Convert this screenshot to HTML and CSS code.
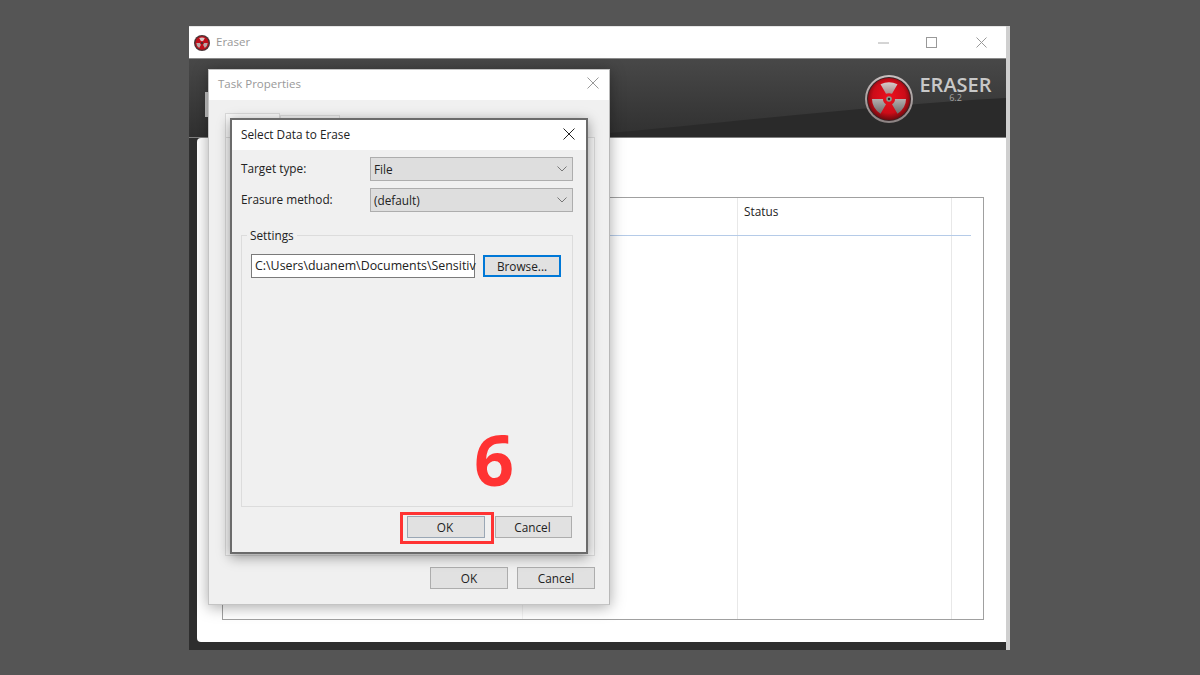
FILE: index.html
```html
<!DOCTYPE html>
<html lang="en">
<head>
<meta charset="utf-8">
<title>Eraser</title>
<link rel="stylesheet" href="styles.css">
</head>
<body>
<main class="desktop">
  <section class="app">
    <header class="app-title">
      <svg class="app-icon" viewBox="0 0 48 48"><circle cx="24" cy="24" r="24" fill="#4a3436"/><circle cx="24" cy="24" r="20" fill="#c00f1a"/><path d="M15.500 9.280Q24 5 32.500 9.280L27 18.800Q24 17.500 21 18.800Z" fill="#d8c8c8"/><path d="M41 24Q41 33 32.500 38.720L27 29.200Q30 27.500 30 24Z" fill="#b8a8a8"/><path d="M7 24Q7 33 15.500 38.720L21 29.200Q18 27.500 18 24Z" fill="#b8a8a8"/><circle cx="24" cy="24" r="3" fill="#333"/></svg>
      <span class="app-name">Eraser</span>
      <div class="win-controls">
        <svg class="ctl" viewBox="0 0 11 11"><path d="M0 6h11" stroke="#aaa" fill="none"/></svg>
        <svg class="ctl" viewBox="0 0 11 11"><rect x=".5" y=".5" width="10" height="10" stroke="#999" fill="none"/></svg>
        <svg class="ctl ctl-close" viewBox="0 0 11 11"><path d="M.5.5l10 10M10.500.5l-10 10" stroke="#999" fill="none"/></svg>
      </div>
    </header>
    <div class="app-banner">
      <svg class="swoosh" viewBox="0 0 817 80" preserveAspectRatio="none"><defs><linearGradient id="bg" x1="0" y1="0" x2="0" y2="1"><stop offset="0" stop-color="#484848"/><stop offset="1" stop-color="#303030"/></linearGradient></defs><rect width="817" height="80" fill="#2a2a2a"/><path d="M0 0H817V40C700 46 560 63 400 78L380 80H0Z" fill="url(#bg)"/></svg>
      <svg class="logo" viewBox="0 0 48 48">
        <defs>
          <radialGradient id="red" cx=".5" cy=".45" r=".55"><stop offset="0" stop-color="#ee101e"/><stop offset=".7" stop-color="#cc0c18"/><stop offset="1" stop-color="#6e090e"/></radialGradient>
          <linearGradient id="rim" x1="0" y1="0" x2="0" y2="1"><stop offset="0" stop-color="#c8c0c0"/><stop offset="1" stop-color="#8b8282"/></linearGradient>
          <linearGradient id="bladeTop" x1="0" y1="0" x2="0" y2="1"><stop offset="0" stop-color="#d8cccc"/><stop offset="1" stop-color="#a88a8a"/></linearGradient>
          <linearGradient id="blade" x1="0" y1="0" x2="0" y2="1"><stop offset="0" stop-color="#b4aeae"/><stop offset="1" stop-color="#6e6a6a"/></linearGradient>
        </defs>
        <circle cx="24" cy="24" r="24" fill="url(#rim)"/>
        <circle cx="24" cy="24" r="22" fill="#3a2426"/>
        <circle cx="24" cy="24" r="21" fill="url(#red)"/>
        <path d="M15.500 9.280Q24 5 32.500 9.280L27 18.800Q24 17.500 21 18.800Z" fill="url(#bladeTop)"/>
        <path d="M41 24Q41 33 32.500 38.720L27 29.200Q30 27.500 30 24Z" fill="url(#blade)"/>
        <path d="M7 24Q7 33 15.500 38.720L21 29.200Q18 27.500 18 24Z" fill="url(#blade)"/>
        <circle cx="24" cy="24" r="2.800" fill="#8c9a90"/>
        <circle cx="24" cy="24" r="1.200" fill="#2a2a2a"/>
      </svg>
      <div class="brand">
        <span class="brand-name">ERASER</span>
        <span class="brand-ver">6.2</span>
      </div>
    </div>
    <div class="app-body">
      <div class="task-list">
        <div class="list-head">
          <div class="col col-a"></div>
          <div class="col col-b"></div>
          <div class="col col-status">Status</div>
          <div class="col col-end"></div>
        </div>
        <div class="list-rows">
          <div class="col col-a"></div>
          <div class="col col-b"></div>
          <div class="col col-status"></div>
          <div class="col col-end"></div>
        </div>
      </div>
    </div>
  </section>

  <div class="peek"></div>

  <section class="dialog task-dialog">
    <header class="dlg-title inactive">
      <span>Task Properties</span>
      <svg class="x" viewBox="0 0 12 12"><path d="M.5.5l11 11M11.500.5l-11 11" stroke="#999" fill="none"/></svg>
    </header>
    <div class="task-body">
      <div class="tabs"><div class="tab tab-on"></div><div class="tab"></div></div>
      <div class="tab-panel"></div>
      <div class="btn-row">
        <button class="btn btn-lg">OK</button>
        <button class="btn btn-lg">Cancel</button>
      </div>
    </div>
  </section>

  <section class="dialog select-dialog">
    <header class="dlg-title">
      <span>Select Data to Erase</span>
      <svg class="x" viewBox="0 0 12 12"><path d="M.5.5l11 11M11.500.5l-11 11" stroke="#222" fill="none"/></svg>
    </header>
    <div class="select-body">
      <div class="field">
        <label class="field-label">Target type:</label>
        <div class="combo"><span>File</span><svg class="chev" viewBox="0 0 10 6"><path d="M.5.500 5 5 9.500.5" stroke="#777" fill="none"/></svg></div>
      </div>
      <div class="field">
        <label class="field-label">Erasure method:</label>
        <div class="combo"><span>(default)</span><svg class="chev" viewBox="0 0 10 6"><path d="M.5.500 5 5 9.500.5" stroke="#777" fill="none"/></svg></div>
      </div>
      <fieldset class="settings">
        <legend>Settings</legend>
        <div class="path-row">
          <div class="path-input">C:\Users\duanem\Documents\Sensitiv</div>
          <button class="btn btn-browse">Browse...</button>
        </div>
      </fieldset>
      <div class="btn-row inner">
        <button class="btn btn-md">OK</button>
        <button class="btn btn-md btn-cancel">Cancel</button>
      </div>
    </div>
  </section>

  <div class="step-box"></div>
  <div class="step-num">6</div>
</main>
</body>
</html>
```
FILE: styles.css
```css
* { box-sizing: border-box; }
html, body { margin: 0; height: 100%; }
body { background: #555; font-family: "Open Sans", "Noto Sans", sans-serif; font-size: 11.8px; color: #222; overflow: hidden; }
.desktop { position: relative; width: 1200px; height: 675px; background: #555; }

.app { position: absolute; left: 189px; top: 26px; width: 821px; height: 624px; background: #2e2e2e; border-right: 4px solid #cfcfcf; display: flex; flex-direction: column; }
.app-title { height: 32px; background: #fff; display: flex; align-items: center; padding: 0 19px 0 5px; border-top: 1px solid #e6e6e6; flex: none; }
.app-icon { width: 16px; height: 16px; }
.app-name { margin-left: 6px; margin-top: -2px; color: #999; font-size: 11.5px; }
.win-controls { margin-left: auto; display: flex; gap: 37px; }
.ctl { width: 11px; height: 11px; }
.ctl-close { margin-left: 2px; }
.app-banner { height: 80px; position: relative; flex: none; display: flex; justify-content: flex-end; align-items: flex-start; padding: 16px 15px 0 0; gap: 6px; border-top: 1px solid #8a8a8a; border-bottom: 1px solid #808080; }
.swoosh { position: absolute; inset: 0; width: 100%; height: 100%; }
.logo { position: relative; width: 48px; height: 48px; margin-right: 1px; }
.brand { position: relative; display: flex; flex-direction: column; align-items: center; width: 71px; }
.brand-name { font-size: 20px; font-weight: 600; color: #c8c8c8; line-height: 18px; margin-top: 1px; }
.brand-ver { font-size: 9px; color: #a4a4a4; line-height: 7px; }
.app-body { flex: 1; margin: 0 0 8px 8px; background: #fff; border-radius: 4px 0 0 4px; padding: 59px 22px 22px 25px; min-height: 0; }
.task-list { height: 423px; width: 762px; border: 1px solid #a0a0a0; display: flex; flex-direction: column; }
.list-head { height: 38px; display: flex; border-bottom: 1px solid #b5cbe8; margin-right: 12px; flex: none; }
.list-rows { flex: 1; display: flex; }
.col { border-right: 1px solid #e8e8e8; }
.col-a { width: 300px; border-right-color: #f3f3f3; }
.col-b { width: 215px; }
.col-status { width: 214px; padding: 5px 0 0 6px; line-height: 16px; color: #222; }
.col-end { border-right: 0; }

.peek { position: absolute; left: 205px; top: 92px; width: 5px; height: 25px; background: #c4c4c4; }

.dialog { position: absolute; background: #f0f0f0; display: flex; flex-direction: column; }
.dlg-title { background: #fff; display: flex; align-items: center; justify-content: space-between; flex: none; height: 30px; padding: 0 10px 2px 9px; }
.task-dialog { left: 208px; top: 69px; width: 402px; height: 536px; border: 1px solid #c4c4c4; border-right-color: #b8b8b8; box-shadow: 0 2px 14px rgba(0,0,0,.35); }
.task-dialog .dlg-title { font-size: 11.5px; padding-bottom: 4px; }
.inactive { color: #999; }
.x { width: 12px; height: 12px; }
.task-body { flex: 1; display: flex; flex-direction: column; padding: 13px 14px 15px 16px; }
.tabs { display: flex; height: 24px; align-items: flex-end; flex: none; }
.tab { width: 60px; height: 22px; border: 1px solid #d9d9d9; border-bottom: 0; background: #f0f0f0; }
.tab-on { width: 55px; height: 24px; background: #f8f8f8; }
.tab-panel { height: 419px; border: 1px solid #d9d9d9; background: #f6f6f6; flex: none; }
.btn-row { display: flex; justify-content: flex-end; gap: 9px; margin-top: 11px; }
.btn { font: inherit; color: #222; background: #e1e1e1; border: 1px solid #adadad; padding: 0; display: block; }
.btn-lg { width: 78px; height: 22px; }

.select-dialog { left: 230px; top: 118px; width: 358px; height: 436px; border: 2px solid #6b6b6b; box-shadow: 0 3px 12px rgba(0,0,0,.4); }
.select-dialog .dlg-title { padding-right: 11px; color: #222; }
.select-body { flex: 1; display: flex; flex-direction: column; padding: 7px 13px 15px 9px; }
.field { display: flex; align-items: center; height: 24px; margin-bottom: 7px; flex: none; }
.field-label { width: 129px; flex: none; margin-top: -2px; }
.combo { flex: 1; height: 24px; background: #dedede; border: 1px solid #adadad; display: flex; align-items: center; justify-content: space-between; padding: 0 5px 0 3px; }
.chev { width: 10px; height: 6px; }
.settings { margin: 9px 0 0; padding: 0 11px; width: 332px; height: 279px; border: 1px solid #dcdcdc; border-radius: 0; flex: none; }
.settings legend { padding: 0 3px; margin-left: -6px; line-height: 14px; }
.path-row { display: flex; align-items: center; gap: 8px; margin-top: 12px; margin-left: -2px; }
.path-input { width: 224px; height: 24px; background: #fff; border: 1px solid #7a7a7a; font-size: 12.4px; line-height: 22px; padding-left: 3px; white-space: nowrap; }
.btn-browse { width: 78px; height: 22px; border: 2px solid #0078d7; }
.inner { margin-top: 9px; gap: 10px; margin-right: 1px; }
.btn-md { width: 78px; height: 22px; border-color: #9aa7b5; padding-right: 2px; }
.btn-cancel { width: 77px; border-color: #adadad; }

.step-box { position: absolute; left: 400px; top: 512px; width: 94px; height: 32px; border: 3.5px solid #ff3333; }
.step-num { position: absolute; left: 474px; top: 413px; font-size: 70px; line-height: 92px; font-weight: 700; color: #ff3333; font-family: "Open Sans", sans-serif; }
```
